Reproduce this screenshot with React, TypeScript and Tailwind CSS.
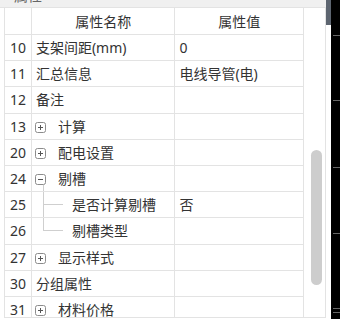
import { FC } from "react";

type Row = {
  n: string;
  name: string;
  value?: string;
  toggle?: "plus" | "minus";
  child?: "mid" | "last";
};

const rows: Row[] = [
  { n: "10", name: "支架间距(mm)", value: "0" },
  { n: "11", name: "汇总信息", value: "电线导管(电)" },
  { n: "12", name: "备注" },
  { n: "13", name: "计算", toggle: "plus" },
  { n: "20", name: "配电设置", toggle: "plus" },
  { n: "24", name: "剔槽", toggle: "minus" },
  { n: "25", name: "是否计算剔槽", value: "否", child: "mid" },
  { n: "26", name: "剔槽类型", child: "last" },
  { n: "27", name: "显示样式", toggle: "plus" },
  { n: "30", name: "分组属性" },
  { n: "31", name: "材料价格", toggle: "plus" },
];

const ToggleBox: FC<{ kind: "plus" | "minus" }> = ({ kind }) => (
  <svg width="11" height="11" viewBox="0 0 11 11" className="shrink-0">
    <rect x="0.5" y="0.5" width="10" height="10" rx="2" fill="white" stroke="#8c8c8c" />
    <line x1="3" y1="5.5" x2="8" y2="5.5" stroke="#555" />
    {kind === "plus" && <line x1="5.5" y1="3" x2="5.5" y2="8" stroke="#555" />}
  </svg>
);

const NameCell: FC<{ row: Row }> = ({ row }) => {
  if (row.toggle) {
    return (
      <div className="flex h-full items-stretch pl-[3px]">
        <div className="flex w-[11px] flex-col">
          <div className="h-[8px]" />
          <ToggleBox kind={row.toggle} />
          {row.toggle === "minus" && <div className="ml-[8px] flex-1 border-l border-[#cfcfcf]" />}
        </div>
        <span className="ml-[12px] self-center">{row.name}</span>
      </div>
    );
  }
  if (row.child) {
    return (
      <div className="flex h-full items-stretch">
        <div className="ml-[11px] flex w-[20px] flex-col">
          <div className="h-1/2 border-b border-l border-[#cfcfcf]" />
          {row.child === "mid" && <div className="h-1/2 border-l border-[#cfcfcf]" />}
        </div>
        <span className="ml-[9px] self-center">{row.name}</span>
      </div>
    );
  }
  return <div className="flex h-full items-center pl-[4px]">{row.name}</div>;
};

const App: FC = () => {
  return (
    <div
      className="flex h-[319px] w-[340px] overflow-hidden bg-white text-[14px] text-[#333]"
      style={{ fontFamily: '"Noto Sans", "Noto Sans CJK SC", sans-serif' }}
    >
      <div className="flex w-[326px] flex-col">
        <div className="h-[8px] overflow-hidden border-b border-[#e3e3e3] bg-[#f0f0f0]">
          <span className="-mt-[11px] ml-[14px] block leading-[14px] text-[#666]">属性</span>
        </div>
        <div className="ml-[4px] flex h-[310px] overflow-hidden border-b border-l border-r border-[#e3e3e3]">
          <div className="flex w-[299px] shrink-0 flex-col border-r border-[#e3e3e3]">
            <div className="flex h-[27px] shrink-0 border-b border-[#e3e3e3]">
              <div className="w-[27px] border-r border-[#e3e3e3]" />
              <div className="flex w-[144px] items-center justify-center border-r border-[#e3e3e3]">属性名称</div>
              <div className="flex w-[128px] items-center justify-center">属性值</div>
            </div>
            {rows.map((row) => (
              <div key={row.n} className="flex h-[26.2px] shrink-0 border-b border-[#e3e3e3]">
                <div className="flex w-[27px] items-center border-r border-[#e3e3e3] pl-[5px]">{row.n}</div>
                <div className="w-[144px] border-r border-[#e3e3e3]">
                  <NameCell row={row} />
                </div>
                <div className="flex w-[128px] items-center pl-[4px]">{row.value}</div>
              </div>
            ))}
          </div>
          <div className="w-[21px] shrink-0 pl-[7px] pt-[142px]">
            <div className="h-[135px] w-[11px] rounded-full bg-[#cdcdcd]" />
          </div>
        </div>
      </div>
      <div className="flex w-[5px] flex-col">
        <div className="h-[25px] bg-[#5d6570]" />
      </div>
      <div className="flex flex-1 flex-col bg-black">
        <div className="ml-[2px] mt-[35px] h-px w-[7px] bg-[#666]" />
        <div className="ml-[2px] mt-[64px] h-px w-[7px] bg-[#666]" />
        <div className="ml-[2px] mt-[66px] h-px w-[7px] bg-[#666]" />
        <div className="ml-[2px] mt-[65px] h-px w-[7px] bg-[#666]" />
        <div className="ml-[2px] mt-[74px] h-px w-[7px] bg-[#666]" />
        <div className="ml-[2px] mt-[3px] h-px w-[7px] bg-[#666]" />
      </div>
    </div>
  );
};

export default App;
